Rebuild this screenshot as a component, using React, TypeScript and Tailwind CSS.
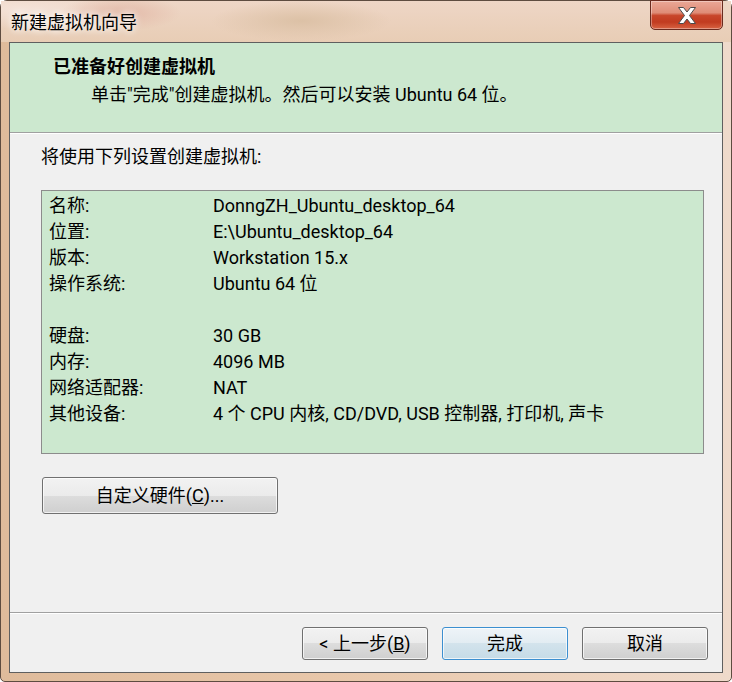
const font = "font-['Roboto','Noto_Sans_CJK_SC',sans-serif]";

const rows: [string, string][] = [
  ["名称:", "DonngZH_Ubuntu_desktop_64"],
  ["位置:", "E:\\Ubuntu_desktop_64"],
  ["版本:", "Workstation 15.x"],
  ["操作系统:", "Ubuntu 64 位"],
  ["", ""],
  ["硬盘:", "30 GB"],
  ["内存:", "4096 MB"],
  ["网络适配器:", "NAT"],
  ["其他设备:", "4 个 CPU 内核, CD/DVD, USB 控制器, 打印机, 声卡"],
];

export default function App() {
  return (
    <div className={`${font} h-[682px] w-[732px] overflow-hidden bg-white text-black`}>
      <div className="flex h-[682px] w-[732px] flex-col rounded-t-[7px] rounded-b-[5px] border border-[#5e4c40] bg-[linear-gradient(90deg,#dfbb9b,#e8c7aa_45%,#eed5c2_85%,#efdacb)]">
        {/* glass title bar */}
        <div className="flex h-[41px] shrink-0 items-start bg-[radial-gradient(ellipse_60px_18px_at_120px_12px,#e3b9a8,transparent),radial-gradient(ellipse_90px_20px_at_300px_20px,#dcc1a6,transparent),radial-gradient(ellipse_120px_20px_at_20px_8px,#f4e2d8,transparent),linear-gradient(180deg,#eed6c6,#e8cdb5)]">
          <span className="mt-[10px] pl-[10px] text-[18px] leading-[24px] [text-shadow:0_0_6px_#fff,0_0_10px_#fff]">新建虚拟机向导</span>
          <div className="-mt-px ml-auto mr-[8px] flex h-[30px] w-[73px] items-center justify-center rounded-b-[5px] border border-[#6a2b1f] bg-[linear-gradient(180deg,#eaa897_0%,#df8c77_42%,#c8462b_52%,#c13b20_75%,#d86342_100%)] shadow-[inset_0_0_0_1px_rgba(255,255,255,0.35)]">
            <svg width="18" height="17" viewBox="0 0 18 17">
              <polygon
                points="0.5,0.5 5.5,0.5 9,5 12.5,0.5 17.5,0.5 11.5,8.5 17.5,16.5 12.5,16.5 9,12 5.5,16.5 0.5,16.5 6.5,8.5"
                fill="#fff"
                stroke="#4b4b4b"
                strokeWidth="1"
                strokeLinejoin="round"
              />
            </svg>
          </div>
        </div>

        {/* client area */}
        <div className="mx-[8px] mb-[8px] flex flex-1 flex-col border border-[#5f5f5f] bg-[#f0f0f0]">
          <div className="h-[89px] shrink-0 bg-[#cce8cf] pt-[12px]">
            <p className="pl-[43px] text-[18px] font-bold leading-[24px]">已准备好创建虚拟机</p>
            <p className="mt-[4px] pl-[81px] text-[18px] leading-[24px]">单击"完成"创建虚拟机。然后可以安装 Ubuntu 64 位。</p>
          </div>
          <div className="h-px bg-[#a0a0a0]" />
          <div className="h-px bg-white" />

          <div className="flex-1 pl-[31px] pt-[11px]">
            <p className="text-[18px] leading-[24px]">将使用下列设置创建虚拟机:</p>
            <div className="mt-[21px] h-[264px] w-[663px] border border-[#8c8c8c] bg-[#cce8cf] pl-[7px] pt-[2px]">
              {rows.map(([label, value], i) => (
                <div key={i} className="flex h-[26px] items-center text-[18px] leading-[26px]">
                  <span className="w-[164px] shrink-0">{label}</span>
                  <span className="whitespace-nowrap">{value}</span>
                </div>
              ))}
            </div>
            <WinButton className="ml-[1px] mt-[23px] h-[37px] w-[236px]">
              自定义硬件(<u>C</u>)...
            </WinButton>
          </div>

          <div className="h-px bg-[#a0a0a0]" />
          <div className="h-px bg-white" />
          <div className="flex h-[58px] shrink-0 justify-end gap-[14px] pr-[14px] pt-[13px]">
            <WinButton className="h-[33px] w-[126px]">
              &lt; 上一步(<u>B</u>)
            </WinButton>
            <WinButton primary className="h-[33px] w-[126px]">
              完成
            </WinButton>
            <WinButton className="h-[33px] w-[126px]">取消</WinButton>
          </div>
        </div>
      </div>
    </div>
  );
}

function WinButton({ children, className = "", primary = false }: { children: React.ReactNode; className?: string; primary?: boolean }) {
  const skin = primary
    ? "border-[#3c8fd0] bg-[linear-gradient(180deg,#eef4f8_0%,#e2ecf2_50%,#d3e3ec_50%,#c5dbe7_100%)]"
    : "border-[#707070] bg-[linear-gradient(180deg,#f2f2f2_0%,#ebebeb_50%,#dddddd_50%,#cfcfcf_100%)]";
  return (
    <button
      type="button"
      className={`flex items-center justify-center rounded-[3px] border text-[18px] leading-[24px] shadow-[inset_0_0_0_1px_rgba(255,255,255,0.7)] ${skin} ${className}`}
    >
      <span>{children}</span>
    </button>
  );
}
